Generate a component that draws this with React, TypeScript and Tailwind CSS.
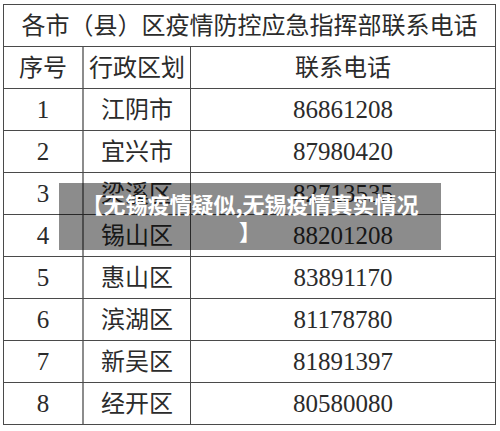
import React from 'react';

const rows: [string, string, string][] = [
  ['1', '江阴市', '86861208'],
  ['2', '宜兴市', '87980420'],
  ['3', '梁溪区', '82713535'],
  ['4', '锡山区', '88201208'],
  ['5', '惠山区', '83891170'],
  ['6', '滨湖区', '81178780'],
  ['7', '新吴区', '81891397'],
  ['8', '经开区', '80580080'],
];

const cell = 'flex items-center justify-center';

const App: React.FC = () => {
  return (
    <div className="w-[500px] h-[431px] bg-white overflow-hidden pt-[4px] pl-[3px]">
      <div
        className="relative w-[493px] border-t border-l border-r border-[#4a4a4a] text-[#2b2b2b]"
        style={{ fontFamily: '"Liberation Serif", "Noto Sans CJK SC", serif' }}
      >
        <div className={`${cell} h-[42px] border-b border-[#4a4a4a] text-[24px] leading-none`}>
          各市（县）区疫情防控应急指挥部联系电话
        </div>

        <div className="grid grid-cols-[78px_108px_1fr] h-[42px] border-b border-[#4a4a4a] text-[24px] leading-none">
          <div className={cell}>序号</div>
          <div className={`${cell} border-l-2 border-[#8c8c8c]`}>行政区划</div>
          <div className={`${cell} border-l border-[#4a4a4a]`}>联系电话</div>
        </div>

        {rows.map(([no, area, phone]) => (
          <div
            key={no}
            className="grid grid-cols-[78px_108px_1fr] h-[42px] border-b border-[#4a4a4a] leading-none"
          >
            <div className={`${cell} text-[25px]`}>{no}</div>
            <div className={`${cell} text-[24px] border-l-2 border-[#8c8c8c]`}>{area}</div>
            <div className={`${cell} text-[25px] border-l border-[#4a4a4a]`}>{phone}</div>
          </div>
        ))}

        {/* title banner laid over the table */}
        <div className="absolute left-[55px] top-[178px] w-[382px] h-[67px] bg-black/45 flex items-center justify-center">
          <p
            className="text-white font-bold text-[22px] leading-[27px] text-center whitespace-nowrap"
            style={{ fontFamily: '"Noto Sans CJK SC", sans-serif' }}
          >
            【无锡疫情疑似,无锡疫情真实情况
            <br />】
          </p>
        </div>
      </div>
    </div>
  );
};

export default App;
